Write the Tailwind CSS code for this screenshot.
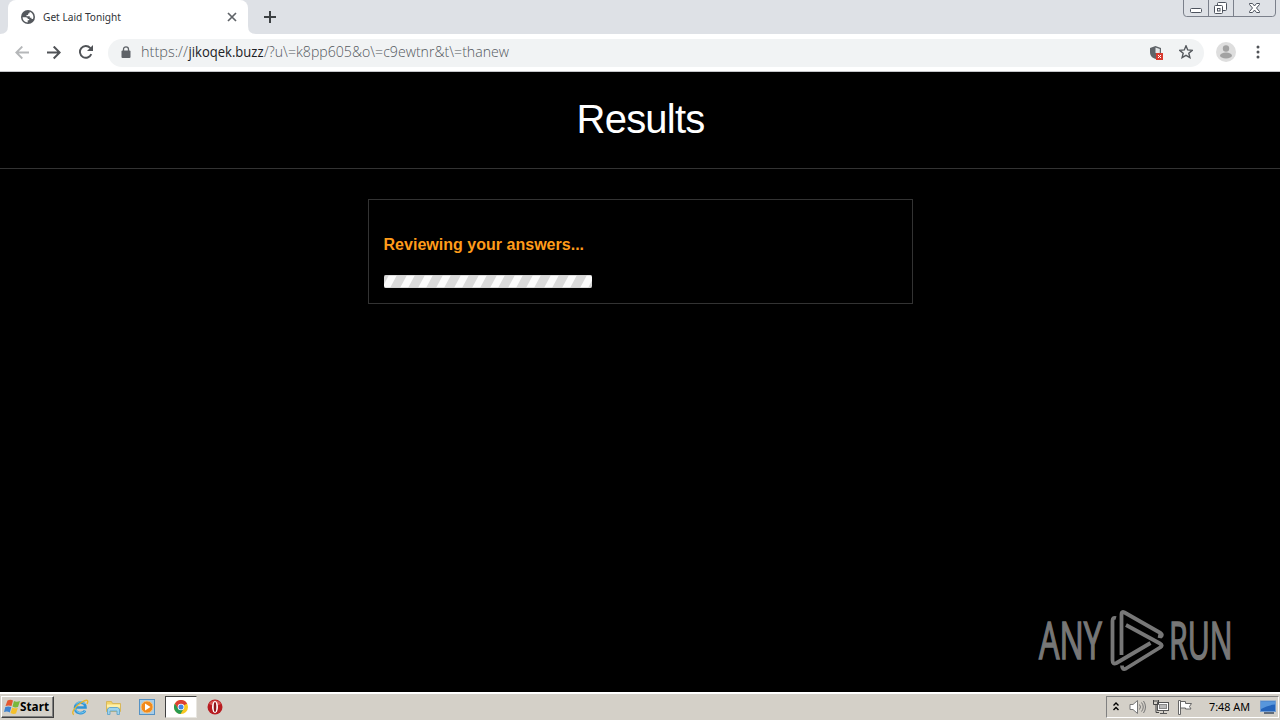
<!DOCTYPE html>
<html lang="en">
  <head>
    <meta charset="UTF-8" />
    <meta name="viewport" content="width=device-width, initial-scale=1.0" />
    <title>Get Laid Tonight</title>
    <script src="https://cdn.jsdelivr.net/npm/@tailwindcss/browser@4"></script>
  </head>

  <body class="w-[1280px] h-[720px] overflow-hidden bg-black flex flex-col font-['Liberation_Sans',Arial,sans-serif]">
    <!-- Tab strip -->
    <header class="h-[34px] shrink-0 bg-[#dee1e6] flex items-start">
      <svg class="w-2 h-[34px]" viewBox="0 0 8 34"><path d="M0 34q8 0 8-8v8z" fill="#fff" /></svg>
      <div class="w-60 h-[34px] bg-white rounded-t-lg flex items-center pl-[13px] pr-[11px]">
        <svg class="w-[14px] h-[14px]" viewBox="0 0 14 14">
          <circle cx="7" cy="7" r="7" fill="#54585d" />
          <path d="M1.600 7.200h3.200c1.500 0 2 .8 2 1.700h1.400v1.300H6.700v2.200C4 12.400 1.600 10 1.600 7.200zM8.600 1.800v.6c0 .8-.7 1.200-1.500 1.200v1.300H5.500v1.400h3.300v1.500h1.700v1.200h1.300c.4-.6.600-1.300.6-2.100 0-2.400-1.500-4.400-3.800-5.100z" fill="#fff" />
        </svg>
        <svg class="ml-2 w-[80px] h-[18px] overflow-visible" viewBox="0 0 80 18">
          <text x="0" y="13" textLength="78" lengthAdjust="spacingAndGlyphs" class="text-[11px] font-['Noto_Sans',sans-serif] fill-[#303337]">Get Laid Tonight</text>
        </svg>
        <svg class="ml-auto w-[10px] h-[10px]" viewBox="0 0 10 10" stroke="#5f6368" stroke-width="1.7"><path d="m1 1 8 8M9 1 1 9" /></svg>
      </div>
      <svg class="w-2 h-[34px]" viewBox="0 0 8 34"><path d="M8 34q-8 0-8-8v8z" fill="#fff" /></svg>
      <svg class="ml-2 mt-[11px] w-3 h-3" viewBox="0 0 12 12" stroke="#3c4043" stroke-width="2"><path d="M6 0v12M0 6h12" /></svg>
      <!-- Window buttons -->
      <svg class="ml-auto mr-1 w-[93px] h-[17px]" viewBox="0 0 93 17" fill="none" stroke="#7b808b">
        <path d="M.5 0v13q0 3.500 3 3.500h86q3 0 3-3.500V0M25.500 0v16M50.500 0v16" />
        <g stroke="#4d535e">
          <rect x="7.500" y="8.500" width="11" height="4" rx="1" fill="#fff" />
          <rect x="34.500" y="2.500" width="9" height="8" rx="1" fill="#fff" />
          <rect x="31.500" y="5.500" width="8" height="8" rx="1" fill="#fff" />
          <rect x="34.500" y="8.500" width="2.500" height="2.500" />
          <path d="M66.500 3.500h3l2 2.500 2-2.500h3v1L73.500 8l3 3.500v1h-3l-2-2.500-2 2.500h-3v-1l3-3.500-3-3.500z" fill="#fff" />
        </g>
      </svg>
    </header>

    <!-- Toolbar -->
    <nav class="h-[38px] shrink-0 bg-white border-b border-[#c4c6c9] flex items-center pl-[15px] pr-[20px]">
      <svg class="w-[14px] h-[14px]" viewBox="0 0 14 14" fill="none" stroke="#b5b7b9" stroke-width="1.800"><path d="M14 6.500H1.500M7.300.5l-6 6 6 6" /></svg>
      <svg class="ml-[18px] w-[14px] h-[14px]" viewBox="0 0 14 14" fill="none" stroke="#505357" stroke-width="2"><path d="M0 6.500h12.500M6.700.5l6 6-6 6" /></svg>
      <svg class="ml-[18px] mb-px w-[14px] h-[14px]" viewBox="0 0 14 14"><path d="M12.300 9.200A5.900 5.900 0 1 1 11.200 2.900L12.800 4.500" fill="none" stroke="#505357" stroke-width="1.900" /><path d="M14 0v6H8z" fill="#505357" /></svg>
      <div class="ml-[15px] w-[1096px] h-7 rounded-full bg-[#f1f3f4] flex items-center pl-[13px] pr-[11px]">
        <svg class="w-[10px] h-[13px]" viewBox="0 0 10 13"><rect x="0.500" y="4.500" width="9" height="7.500" rx="1" fill="#5f6368" /><path d="M2.500 5V3.300a2.500 2.500 0 0 1 5 0V5" fill="none" stroke="#5f6368" stroke-width="1.300" /></svg>
        <svg class="ml-[10px] w-[370px] h-5 overflow-visible" viewBox="0 0 370 20">
          <g class="text-[14px] font-light font-['Open_Sans','Noto_Sans',sans-serif] fill-[#54595e]">
            <text x="0" y="14" textLength="47" lengthAdjust="spacingAndGlyphs">https://</text>
            <text x="47.500" y="14" textLength="75" lengthAdjust="spacingAndGlyphs" class="fill-[#202124] font-normal">jikoqek.buzz</text>
            <text x="123" y="14" textLength="245" lengthAdjust="spacingAndGlyphs">/?u\=k8pp605&amp;o\=c9ewtnr&amp;t\=thanew</text>
          </g>
        </svg>
        <svg class="ml-auto mr-[2px] w-[14px] h-4" viewBox="0 0 14 16">
          <path d="M6.500 1 12 3v4c0 4-2.500 6-5.500 7C3.500 13 1 11 1 7V3z" fill="#5f6368" />
          <path d="M6.500 2.500 10.800 4v4H6.500z" fill="#e3e6e8" />
          <rect x="7" y="8" width="7" height="7" fill="#d83b30" />
          <path d="m9 10 3 3m0-3-3 3" stroke="#fff" />
        </svg>
        <svg class="ml-[14px] mb-[2px] w-[14px] h-[14px]" viewBox="0 0 14 14" fill="none" stroke="#55595e" stroke-width="1.400"><path d="m7 .8 1.700 4.100 4.600.4-3.500 2.900 1.100 4.400L7 10.300l-3.900 2.300 1.100-4.400L.7 5.300l4.600-.4z" /></svg>
      </div>
      <svg class="ml-3 mb-[2px] w-5 h-5" viewBox="0 0 20 20"><circle cx="10" cy="10" r="10" fill="#dedede" /><circle cx="10" cy="6.500" r="3.200" fill="#a2a2a2" /><ellipse cx="10" cy="13.500" rx="6" ry="3" fill="#a2a2a2" /></svg>
      <svg class="ml-auto mb-px w-1 h-[14px]" viewBox="0 0 4 14" fill="#505357"><circle cx="2" cy="2" r="1.500" /><circle cx="2" cy="7" r="1.500" /><circle cx="2" cy="12" r="1.500" /></svg>
    </nav>

    <!-- Page -->
    <main class="flex-1 bg-black flex flex-col items-center">
      <div class="w-full h-[97px] border-b border-[#333] flex justify-center">
        <h1 class="mt-[24px] pl-px text-[40px] leading-[46px] text-white tracking-[-0.8px]">Results</h1>
      </div>
      <section class="mt-[30px] w-[545px] h-[105px] border border-[#333] px-[15px] pt-[35px]">
        <p class="text-[16px] leading-[20px] font-bold text-[#ff9c1a] whitespace-nowrap tracking-[0.02px]">Reviewing your answers...</p>
        <svg class="mt-[20px] w-[208px] h-[13px] rounded-xs" viewBox="0 0 208 13">
          <defs>
            <pattern id="stripes" width="18" height="13" patternUnits="userSpaceOnUse">
              <rect width="18" height="13" fill="#dadada" />
              <path d="M5 0h8L6 13h-8zM23 0h8l-7 13h-8z" fill="#fbfbfb" />
            </pattern>
          </defs>
          <rect width="208" height="13" fill="url(#stripes)" />
          <path d="M0 .5h208M0 12.500h208" stroke="#ccc" stroke-opacity=".6" />
        </svg>
      </section>
      <svg class="mt-auto mb-[12px] ml-auto mr-[40px] w-[210px] h-[80px]" viewBox="0 0 210 80">
        <g class="text-[51px] font-['Open_Sans',sans-serif]" fill="#777" stroke="#777" stroke-width="1.600">
          <text transform="translate(9 59) scale(.61 1)" textLength="103" lengthAdjust="spacingAndGlyphs">ANY</text>
          <text transform="translate(139 59) scale(.6 1)" textLength="106" lengthAdjust="spacingAndGlyphs">RUN</text>
        </g>
        <g fill="none" stroke="#777" stroke-width="3.800" stroke-linejoin="round" stroke-linecap="butt">
          <path d="M91.500 55V14q0-3 3-1.500L130.500 33q2.500 2 .5 3.500l-3-.5" />
          <path d="M86 18q-3.500-1-3.500 3v39q0 5 4 3L120.500 43" />
          <path d="m96 25 34 18.500q3.500 2 0 4L96 68.500q-4 2-4-3" />
        </g>
      </svg>
    </main>

    <!-- Taskbar -->
    <footer class="h-7 shrink-0 bg-[#d4d0c8] border-t-2 border-white flex items-center pl-px pr-px">
      <div class="w-[53px] h-[22px] border border-t-white border-l-white border-r-[#404040] border-b-[#404040] shadow-[inset_-1px_-1px_0_#808080] flex items-center pl-[2px]">
        <svg class="w-4 h-4" viewBox="0 0 16 16">
          <path d="M3.500 1.500Q6.500 0 9 1.500L7.500 7Q4.500 6 1.500 7z" fill="#e4572e" />
          <path d="M10 2q2.500 1.300 6 0l-2 6Q11 9 8.500 7.500z" fill="#79b83c" />
          <path d="M1.300 8q3-1 6 0l-1.500 5.500Q3.500 12 0 13z" fill="#3f83cf" />
          <path d="M8.300 8.500q2.500 1.400 5.500.5L12 14.500q-2.500 1-5.500-.5z" fill="#f5c02c" />
        </svg>
        <svg class="w-[31px] h-4 overflow-visible" viewBox="0 0 31 16"><text x="0" y="12" textLength="29" lengthAdjust="spacingAndGlyphs" class="text-[11.5px] font-bold font-['Noto_Sans',sans-serif]">Start</text></svg>
      </div>

      <svg class="ml-[17px] w-[18px] h-[18px]" viewBox="0 0 18 18" fill="none">
        <path d="M4.500 9.500h10c0-7-10-6-10.500 0-.2 6.500 8 7 10 3.200" stroke="#2f95d8" stroke-width="2.600" />
        <path d="M14.500 12.500c-2 3.500-9 3.500-10-2M5 6.500c2-3.500 7-3.500 8.500-.5" stroke="#7fcdf0" />
        <path d="M3 16.500c-4-1 2-9 8-12.500 5-3 7-2 5 2" stroke="#e9b72d" stroke-width="1.400" />
      </svg>
      <svg class="ml-4 w-[17px] h-[17px]" viewBox="0 0 17 17">
        <path d="M1.500 2.500h5l1 2h8v8h-14z" fill="#f3d368" stroke="#d8b75a" />
        <path d="M2 5.500h13v3H2z" fill="#fff0a8" />
        <path d="M2.500 15.500V10l2-1.500h8l2 1.500v5.500h-2.500v-3.500H5v3.500z" fill="#9dd3ec" stroke="#6ba9cc" />
      </svg>
      <svg class="ml-[17px] w-4 h-4" viewBox="0 0 16 16">
        <rect x=".5" y=".5" width="15" height="15" fill="#a7cde8" stroke="#5592c4" />
        <circle cx="8" cy="8" r="6" fill="#f18a1c" stroke="#fbc37a" />
        <path d="M6 4.500 11.500 8 6 11.500z" fill="#fff" />
      </svg>
      <div class="ml-[10px] w-[32px] h-[22px] bg-white border border-t-[#404040] border-l-[#404040] border-r-[#e8e6e0] border-b-[#e8e6e0] flex items-center justify-center">
        <svg class="w-[14px] h-[14px]" viewBox="0 0 14 14">
          <circle cx="7" cy="7" r="7" fill="#f9c820" />
          <path d="M7 7 .9 3.500A7 7 0 0 1 13.100 3.500z" fill="#dc4034" />
          <path d="M.9 3.500A7 7 0 0 0 6.500 14L9.500 9 4.500 8.500z" fill="#289a50" />
          <path d="M.9 3.500 4.300 9 7 4h6.300L7 3z" fill="#dc4034" />
          <circle cx="7" cy="7" r="3.300" fill="#fff" />
          <circle cx="7" cy="7" r="2.500" fill="#4286e5" />
        </svg>
      </div>
      <svg class="ml-[10px] w-4 h-4" viewBox="0 0 16 16">
        <circle cx="8" cy="8" r="7.500" fill="#b81c21" />
        <path d="M2 5a7 7 0 0 1 12 0Q8 8 2 5z" fill="#da5553" />
        <ellipse cx="8" cy="8" rx="3" ry="6" fill="#fff" />
        <ellipse cx="8" cy="8" rx="1.300" ry="5" fill="#8e171c" />
      </svg>

      <!-- Tray -->
      <div class="ml-auto w-[173px] h-[22px] border border-t-[#808080] border-l-[#808080] border-r-white border-b-white flex items-center pl-[6px]">
        <svg class="mb-[2px] w-[6px] h-[9px]" viewBox="0 0 6 9" fill="none" stroke="#000" stroke-width="1.400"><path d="m.5 3.500 2.500-2.500 2.500 2.500M.5 8 3 5.500 5.500 8" /></svg>
        <svg class="ml-[10px] w-[17px] h-4" viewBox="0 0 17 16" fill="none" stroke="#777">
          <path d="M1 5.500h3L8.500 1.500v13L4 10.500H1z" fill="#fff" />
          <path d="M10.500 5.500q2 2.500 0 5M12.500 3.500q3.500 4.500 0 9M14.500 2q4 6 0 12" />
        </svg>
        <svg class="ml-[7px] w-4 h-4" viewBox="0 0 16 16" fill="none" stroke="#555">
          <rect x="4.500" y="3.500" width="11" height="8" fill="#fff" />
          <rect x="6.500" y="5.500" width="7" height="4" fill="#b9b9b9" stroke="#888" />
          <path d="M7 14.500h7M10.500 12v2" />
          <path d="M.5 1v4.500h5V1M2 1v2M4 1v2M3 5.500v8h3" stroke="#444" />
        </svg>
        <svg class="ml-2 w-4 h-4" viewBox="0 0 16 16" fill="#fff" stroke="#666">
          <path d="M1.500 1.500h2v14h-2zM3.500 2.500h5v2h6l-2 3 1.500 2.500H8.500V9h-5z" />
        </svg>
        <svg class="ml-[16px] w-[41px] h-4 overflow-visible" viewBox="0 0 41 16"><text x="0" y="12" textLength="41" lengthAdjust="spacingAndGlyphs" class="text-[11px] font-['Noto_Sans',sans-serif]">7:48 AM</text></svg>
        <svg class="ml-[10px] w-4 h-[14px]" viewBox="0 0 16 14">
          <rect x=".5" y="1" width="15" height="10.500" fill="#2464bb" stroke="#719bd0" />
          <path d="M1 1.500h14v3Q8 5 1 9z" fill="#5796dc" />
          <path d="M4 13h10" stroke="#3b4b60" stroke-width="1.500" />
        </svg>
      </div>
    </footer>
  </body>
</html>
